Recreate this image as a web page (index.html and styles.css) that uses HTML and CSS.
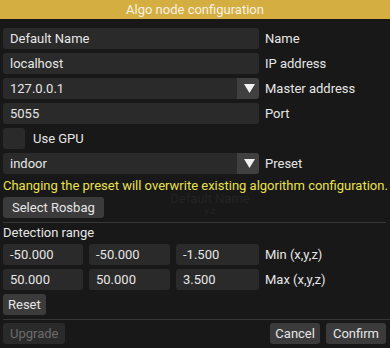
FILE: index.html
```html
<!DOCTYPE html>
<html>
    <head>
        <meta charset="utf-8">
        <meta name="viewport" content="width=device-width, initial-scale=1">
        <link rel="stylesheet" href="styles.css">
    </head>
    <body>
        <div class="window">
            <header class="titlebar">Algo node configuration</header>
            <main class="content">
                <div class="row">
                    <div class="field">Default Name</div>
                    <span class="label">Name</span>
                </div>
                <div class="row">
                    <div class="field">localhost</div>
                    <span class="label">IP address</span>
                </div>
                <div class="row">
                    <div class="combo">
                        <span class="combo-value">127.0.0.1</span>
                        <span class="combo-arrow">
                            <svg width="11" height="9" viewBox="0 0 11 9"><polygon points="0,0 11,0 5.5,9"></polygon></svg>
                        </span>
                    </div>
                    <span class="label">Master address</span>
                </div>
                <div class="row">
                    <div class="field">5055</div>
                    <span class="label">Port</span>
                </div>
                <div class="check-row">
                    <span class="checkbox"></span>
                    <span class="label">Use GPU</span>
                </div>
                <div class="row">
                    <div class="combo">
                        <span class="combo-value">indoor</span>
                        <span class="combo-arrow">
                            <svg width="11" height="9" viewBox="0 0 11 9"><polygon points="0,0 11,0 5.5,9"></polygon></svg>
                        </span>
                    </div>
                    <span class="label">Preset</span>
                </div>
                <p class="warning">Changing the preset will overwrite existing algorithm configuration.</p>
                <div class="button-row">
                    <button class="btn btn-wide">Select Rosbag</button>
                    <div class="ghost">Default Name<br><span>y z</span></div>
                </div>
                <hr class="separator">
                <div class="section-title">Detection range</div>
                <div class="row">
                    <div class="triple">
                        <div class="field">-50.000</div>
                        <div class="field">-50.000</div>
                        <div class="field">-1.500</div>
                    </div>
                    <span class="label">Min (x,y,z)</span>
                </div>
                <div class="row">
                    <div class="triple">
                        <div class="field">50.000</div>
                        <div class="field">50.000</div>
                        <div class="field">3.500</div>
                    </div>
                    <span class="label">Max (x,y,z)</span>
                </div>
                <div class="button-row">
                    <button class="btn btn-narrow">Reset</button>
                </div>
                <hr class="separator separator-wide">
                <footer class="actions">
                    <button class="btn" disabled>Upgrade</button>
                    <button class="btn btn-narrow push">Cancel</button>
                    <button class="btn">Confirm</button>
                </footer>
            </main>
        </div>
    </body>
</html>
```
FILE: styles.css
```css
html,
body {
    height : 100%;
    margin : 0;
    padding: 0;
}

body {
    background-color: #181818;
    color           : #e6e6e6;
    font-family     : Roboto, "Liberation Sans", sans-serif;
    font-size       : 13px;
    overflow        : hidden;
}

.titlebar {
    background-color: #d5ae41;
    color           : #f6f1e2;
    height          : 19px;
    line-height     : 19px;
    text-align      : center;
}

.content {
    display       : flex;
    flex-direction: column;
    gap           : 4px;
    padding       : 9px 4px 0 3px;
}

.row {
    align-items          : center;
    column-gap           : 6px;
    display              : grid;
    grid-template-columns: 256px auto;
    height               : 21px;
}

.field,
.combo-value {
    background-color: #2a2a2a;
    border-radius   : 3px;
    box-sizing      : border-box;
    height          : 21px;
    line-height     : 21px;
    overflow        : hidden;
    padding         : 0 7px;
    white-space     : nowrap;
}

.label {
    white-space: nowrap;
}

.combo {
    display: flex;
    height : 21px;
}

.combo-value {
    border-radius: 3px 0 0 3px;
    flex         : 1 1 auto;
}

.combo-arrow {
    align-items     : center;
    background-color: #404040;
    border-radius   : 0 3px 3px 0;
    display         : flex;
    justify-content : center;
    padding-left    : 2px;
    width           : 20px;
}

.combo-arrow svg {
    fill: #f2f2f2;
}

.check-row {
    align-items: center;
    display    : flex;
    gap        : 8px;
    height     : 21px;
}

.checkbox {
    background-color: #2a2a2a;
    border-radius   : 3px;
    height          : 21px;
    width           : 22px;
}

.warning {
    color      : #e9e14f;
    height     : 15px;
    line-height: 15px;
    margin     : 0;
    white-space: nowrap;
}

.button-row {
    display : flex;
    position: relative;
}

.btn {
    background-color: #3b3b3b;
    border          : none;
    border-radius   : 3px;
    color           : #e6e6e6;
    font-family     : inherit;
    font-size       : 13px;
    height          : 21px;
    line-height     : 21px;
    padding         : 0 7px;
}

.btn-wide {
    padding: 0 9px;
}

.btn-narrow {
    padding: 0 5px;
}

.btn:disabled {
    background-color: #2a2a2a;
    color           : #6c6c6c;
}

/* restos de un tooltip que se ve apenas */
.ghost {
    color      : #232323;
    left       : 166px;
    line-height: 11px;
    position   : absolute;
    text-align : center;
    top        : -4px;
    width      : 82px;
}

.ghost span {
    font-size: 9px;
}

.separator {
    border          : none;
    background-color: #363636;
    height          : 1px;
    margin          : 0 0 -1px;
}

.separator-wide {
    margin-right: -4px;
}

.section-title {
    height     : 14px;
    line-height: 14px;
}

.triple {
    display              : grid;
    gap                  : 6px;
    grid-template-columns: 80px 81px 1fr;
}

.actions {
    display: flex;
    gap    : 6px;
}

.push {
    margin-left: auto;
}
```
